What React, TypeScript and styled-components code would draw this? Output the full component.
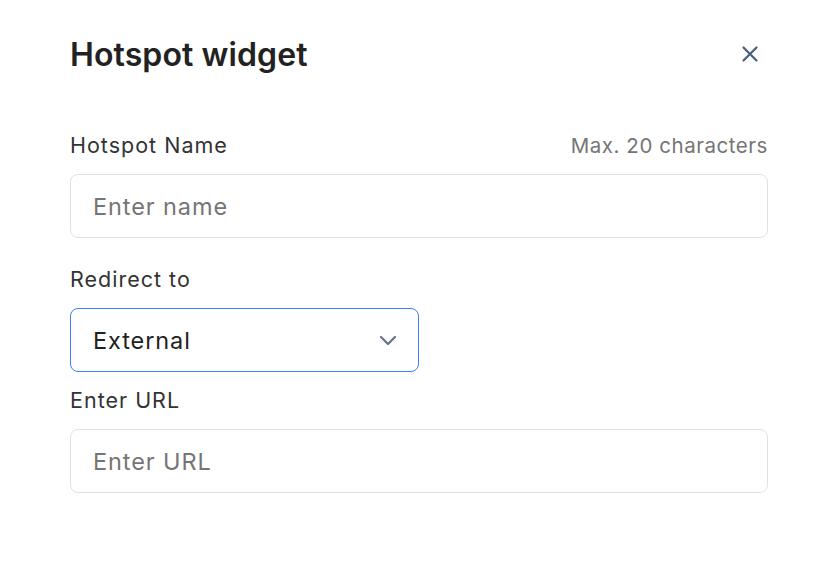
import React from 'react';
import styled, { createGlobalStyle } from 'styled-components';

const GlobalStyle = createGlobalStyle`
  html, body {
    margin: 0;
    padding: 0;
    background: #ffffff;
  }
  body {
    font-family: Inter, "Noto Sans", sans-serif;
    -webkit-font-smoothing: antialiased;
  }
  * {
    box-sizing: border-box;
  }
`;

const ChevronDown = () => (
  <svg width="18" height="11" viewBox="0 0 18 11" fill="none">
    <path d="M2 2l7 7 7-7" stroke="#64748b" strokeWidth="2.2" strokeLinecap="round" strokeLinejoin="round" />
  </svg>
);

const CloseIcon = () => (
  <svg width="18" height="18" viewBox="0 0 18 18" fill="none">
    <path d="M2.5 2.5l13 13M15.5 2.5l-13 13" stroke="#4a6280" strokeWidth="2.3" strokeLinecap="round" />
  </svg>
);

const App = () => {
  return (
    <>
      <GlobalStyle />
      <S.Panel>
        <S.Header>
          <S.Title>Hotspot widget</S.Title>
          <S.CloseButton aria-label="Close">
            <CloseIcon />
          </S.CloseButton>
        </S.Header>

        <S.Field $gap={59}>
          <S.LabelRow>
            <S.Label>Hotspot Name</S.Label>
            <S.Hint>Max. 20 characters</S.Hint>
          </S.LabelRow>
          <S.Input placeholder="Enter name" />
        </S.Field>

        <S.Field $gap={29}>
          <S.LabelRow>
            <S.Label>Redirect to</S.Label>
          </S.LabelRow>
          <S.Select>
            <S.SelectValue>External</S.SelectValue>
            <ChevronDown />
          </S.Select>
        </S.Field>

        <S.Field $gap={16}>
          <S.LabelRow>
            <S.Label>Enter URL</S.Label>
          </S.LabelRow>
          <S.Input placeholder="Enter URL" />
        </S.Field>
      </S.Panel>
    </>
  );
};

export default App;

const S = {
  Panel: styled.div`
    width: 840px;
    height: 578px;
    padding: 34px 72px 0 70px;
    display: flex;
    flex-direction: column;
  `,
  Header: styled.div`
    display: flex;
    align-items: center;
    justify-content: space-between;
    height: 40px;
  `,
  Title: styled.h1`
    margin: 0;
    font-size: 32px;
    font-weight: 600;
    color: #222222;
    letter-spacing: 0.1px;
  `,
  CloseButton: styled.button`
    display: flex;
    align-items: center;
    justify-content: center;
    width: 32px;
    height: 32px;
    margin-right: 2px;
    padding: 0;
    border: none;
    background: none;
    cursor: pointer;
  `,
  Field: styled.div<{ $gap: number }>`
    display: flex;
    flex-direction: column;
    gap: 17px;
    margin-top: ${(props) => props.$gap}px;
  `,
  LabelRow: styled.div`
    display: flex;
    align-items: baseline;
    justify-content: space-between;
    height: 24px;
  `,
  Label: styled.span`
    font-size: 21.5px;
    color: #333333;
    line-height: 24px;
    letter-spacing: 1px;
  `,
  Hint: styled.span`
    font-size: 20.5px;
    color: #757575;
    line-height: 24px;
    letter-spacing: 0.55px;
  `,
  Input: styled.input`
    width: 100%;
    height: 64px;
    padding: 0 22px;
    border: 1px solid #dde2ea;
    border-radius: 8px;
    font-family: Inter, "Noto Sans", sans-serif;
    font-size: 23.5px;
    letter-spacing: 0.9px;
    color: #222222;
    outline: none;

    &::placeholder {
      color: #757575;
    }
  `,
  Select: styled.div`
    display: flex;
    align-items: center;
    justify-content: space-between;
    width: 349px;
    height: 64px;
    padding: 0 21px 0 22px;
    border: 1px solid #3b82f6;
    border-radius: 8px;
    cursor: pointer;
  `,
  SelectValue: styled.span`
    font-size: 23.5px;
    letter-spacing: 0.9px;
    color: #222222;
  `
};
